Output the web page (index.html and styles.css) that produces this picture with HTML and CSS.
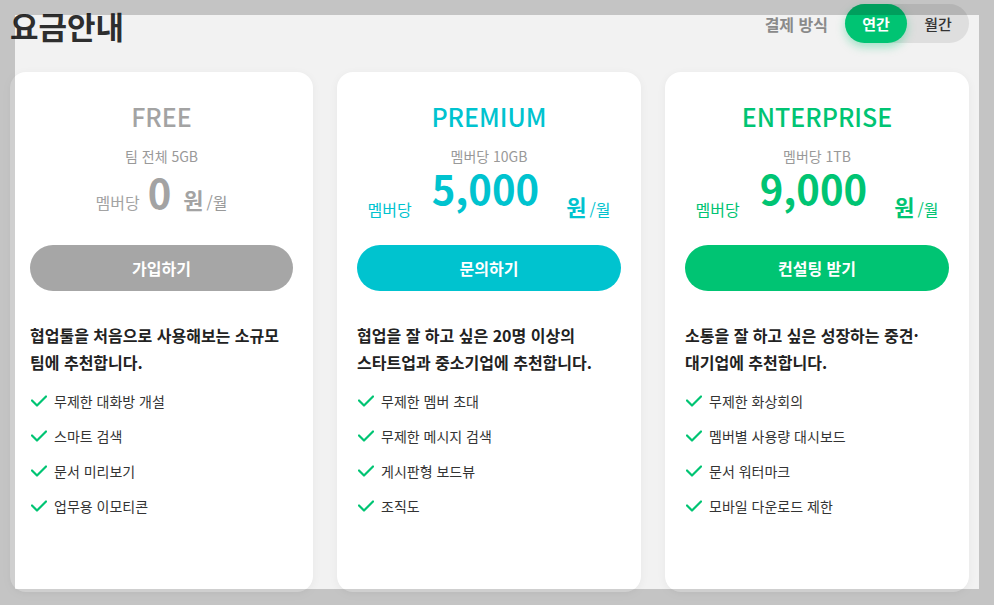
FILE: index.html
```html
<!DOCTYPE html>
<html lang="ko">
<head>
<meta charset="utf-8">
<title>요금안내</title>
<link rel="stylesheet" href="styles.css">
</head>
<body>
<div class="page">
  <header class="header">
    <h1 class="title">요금안내</h1>
    <div class="billing">
      <span class="billing-label">결제 방식</span>
      <div class="toggle">
        <span class="toggle-opt active">연간</span>
        <span class="toggle-opt">월간</span>
      </div>
    </div>
  </header>

  <main class="plans">
    <section class="card free">
      <h2 class="plan-name">FREE</h2>
      <p class="storage">팀 전체 5GB</p>
      <div class="price">
        <span class="per">멤버당</span>
        <span class="amount">0</span>
        <span class="won">원</span>
        <span class="month">/월</span>
      </div>
      <button class="cta">가입하기</button>
      <p class="desc">협업툴을 처음으로 사용해보는 소규모<br>팀에 추천합니다.</p>
      <ul class="features">
        <li><svg class="check" viewBox="0 0 16 12"><path d="M1 5.5 L6 10.5 L15 1.5"/></svg>무제한 대화방 개설</li>
        <li><svg class="check" viewBox="0 0 16 12"><path d="M1 5.5 L6 10.5 L15 1.5"/></svg>스마트 검색</li>
        <li><svg class="check" viewBox="0 0 16 12"><path d="M1 5.5 L6 10.5 L15 1.5"/></svg>문서 미리보기</li>
        <li><svg class="check" viewBox="0 0 16 12"><path d="M1 5.5 L6 10.5 L15 1.5"/></svg>업무용 이모티콘</li>
      </ul>
    </section>

    <section class="card premium">
      <h2 class="plan-name">PREMIUM</h2>
      <p class="storage">멤버당 10GB</p>
      <div class="price raised">
        <span class="per">멤버당</span>
        <span class="amount">5,000</span>
        <span class="won">원</span>
        <span class="month">/월</span>
      </div>
      <button class="cta">문의하기</button>
      <p class="desc">협업을 잘 하고 싶은 20명 이상의<br>스타트업과 중소기업에 추천합니다.</p>
      <ul class="features">
        <li><svg class="check" viewBox="0 0 16 12"><path d="M1 5.5 L6 10.5 L15 1.5"/></svg>무제한 멤버 초대</li>
        <li><svg class="check" viewBox="0 0 16 12"><path d="M1 5.5 L6 10.5 L15 1.5"/></svg>무제한 메시지 검색</li>
        <li><svg class="check" viewBox="0 0 16 12"><path d="M1 5.5 L6 10.5 L15 1.5"/></svg>게시판형 보드뷰</li>
        <li><svg class="check" viewBox="0 0 16 12"><path d="M1 5.5 L6 10.5 L15 1.5"/></svg>조직도</li>
      </ul>
    </section>

    <section class="card enterprise">
      <h2 class="plan-name">ENTERPRISE</h2>
      <p class="storage">멤버당 1TB</p>
      <div class="price raised">
        <span class="per">멤버당</span>
        <span class="amount">9,000</span>
        <span class="won">원</span>
        <span class="month">/월</span>
      </div>
      <button class="cta">컨설팅 받기</button>
      <p class="desc">소통을 잘 하고 싶은 성장하는 중견·<br>대기업에 추천합니다.</p>
      <ul class="features">
        <li><svg class="check" viewBox="0 0 16 12"><path d="M1 5.5 L6 10.5 L15 1.5"/></svg>무제한 화상회의</li>
        <li><svg class="check" viewBox="0 0 16 12"><path d="M1 5.5 L6 10.5 L15 1.5"/></svg>멤버별 사용량 대시보드</li>
        <li><svg class="check" viewBox="0 0 16 12"><path d="M1 5.5 L6 10.5 L15 1.5"/></svg>문서 워터마크</li>
        <li><svg class="check" viewBox="0 0 16 12"><path d="M1 5.5 L6 10.5 L15 1.5"/></svg>모바일 다운로드 제한</li>
      </ul>
    </section>
  </main>
</div>
<div class="focus-frame"></div>
</body>
</html>
```

FILE: styles.css
```css
* { box-sizing: border-box; }

html, body {
  margin: 0;
  padding: 0;
  background: #f2f2f2;
  height: 100%;
  overflow: hidden;
}

body {
  font-family: "Noto Sans CJK KR", "Noto Sans", sans-serif;
  color: #222;
}

.page {
  width: 969px;
  padding: 4px 0 0 10px;
}

.header {
  display: flex;
  justify-content: space-between;
  align-items: center;
  height: 39px;
}

.title {
  margin: 4px 0 0;
  font-size: 31px;
  font-weight: 700;
  color: #2e2e2e;
  line-height: 45px;
}

.billing {
  display: flex;
  align-items: center;
  gap: 17px;
}

.billing-label {
  font-size: 16px;
  font-weight: 700;
  color: #8a8a8a;
}

.toggle {
  display: flex;
  width: 124px;
  height: 39px;
  border-radius: 20px;
  background: #dedede;
}

.toggle-opt {
  width: 62px;
  display: flex;
  align-items: center;
  justify-content: center;
  font-size: 15px;
  font-weight: 500;
  color: #333;
  border-radius: 20px;
}

.toggle-opt.active {
  background: #00c473;
  color: #fff;
  font-weight: 700;
  box-shadow: 0 4px 10px rgba(0, 196, 115, 0.35);
}

.plans {
  display: grid;
  grid-template-columns: 303px 304px 304px;
  gap: 24px;
  margin-top: 29px;
}

.card {
  height: 520px;
  background: #fff;
  border-radius: 16px;
  box-shadow: 0 2px 10px rgba(0, 0, 0, 0.05);
  padding: 26px 20px 0;
  display: flex;
  flex-direction: column;
  align-items: stretch;
}

.plan-name {
  margin: 0;
  text-align: center;
  font-size: 25px;
  line-height: 36px;
  font-weight: 500;
}

.storage {
  margin: 12px 0 0;
  text-align: center;
  font-size: 14px;
  line-height: 20px;
  color: #999;
}

.price {
  height: 51px;
  display: flex;
  justify-content: center;
  align-items: flex-end;
  padding-bottom: 7px;
}

.price span { line-height: 1; }

.per { font-size: 16px; }

.price .amount {
  font-size: 40px;
  line-height: 0.85;
  font-weight: 700;
  margin: 0 11px 1px 8px;
}

.won {
  font-size: 22px;
  font-weight: 700;
  margin: 0 3px 0 1px;
}

.month { font-size: 16px; }

.price.raised { padding-bottom: 0; }

.price.raised .amount {
  margin: 0 26px 12px 20px;
}

.cta {
  margin-top: 28px;
  height: 46px;
  border: 0;
  border-radius: 23px;
  color: #fff;
  font-family: inherit;
  font-size: 16px;
  font-weight: 700;
  cursor: pointer;
}

.desc {
  margin: 31px 0 0;
  font-size: 16px;
  line-height: 27px;
  font-weight: 700;
  color: #222;
}

.features {
  list-style: none;
  margin: 7px 0 0;
  padding: 0;
}

.features li {
  display: flex;
  align-items: center;
  height: 35px;
  font-size: 14px;
  color: #333;
}

.check {
  width: 16px;
  height: 12px;
  margin: 0 7px 0 1px;
  flex: none;
}

.check path {
  fill: none;
  stroke: #00c473;
  stroke-width: 2.2;
  stroke-linecap: round;
  stroke-linejoin: round;
}

/* plan colours */
.free .plan-name,
.free .price { color: #a3a3a3; }
.free .cta { background: #a6a6a6; }

.premium .plan-name,
.premium .price { color: #00c3cf; }
.premium .cta { background: #00c3cf; }

.enterprise .plan-name,
.enterprise .price { color: #00c473; }
.enterprise .cta { background: #00c473; }

.free .price .month { color: #999; }

/* darkened surround of the focused region */
.focus-frame {
  position: fixed;
  left: 15px;
  top: 15px;
  width: 964px;
  height: 574px;
  box-shadow: 0 0 0 2000px rgba(0, 0, 0, 0.19);
  pointer-events: none;
}
```
